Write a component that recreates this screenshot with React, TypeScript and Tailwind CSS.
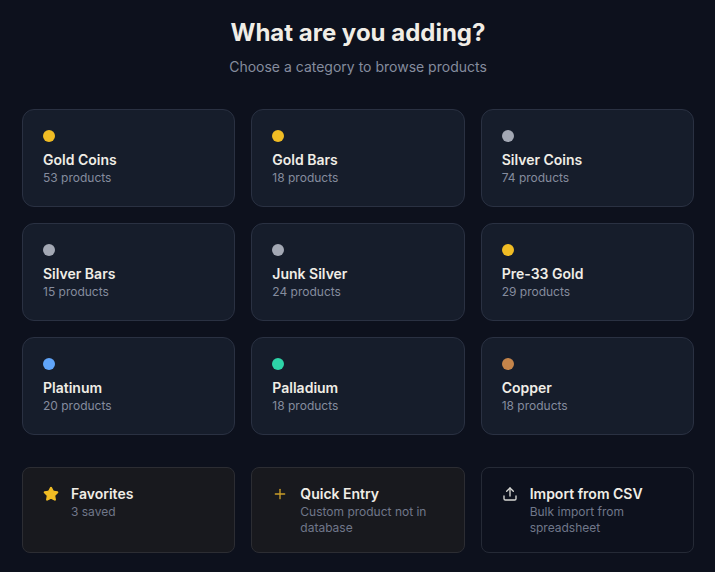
import React from 'react';
import { Star, Plus, Upload } from 'lucide-react';

const categories = [
    { name: 'Gold Coins', count: 53, dot: 'bg-[#f0bc24]' },
    { name: 'Gold Bars', count: 18, dot: 'bg-[#f0bc24]' },
    { name: 'Silver Coins', count: 74, dot: 'bg-[#a3a8b4]' },
    { name: 'Silver Bars', count: 15, dot: 'bg-[#a3a8b4]' },
    { name: 'Junk Silver', count: 24, dot: 'bg-[#a3a8b4]' },
    { name: 'Pre-33 Gold', count: 29, dot: 'bg-[#f0bc24]' },
    { name: 'Platinum', count: 20, dot: 'bg-[#60a5fa]' },
    { name: 'Palladium', count: 18, dot: 'bg-[#2dd4a8]' },
    { name: 'Copper', count: 18, dot: 'bg-[#c4844a]' },
];

export default function App() {
    return (
        <div className="min-h-[572px] bg-[#0d111d] font-['Inter',sans-serif]">
            <div className="ml-[22px] w-[672px] pt-[17px]">
                <div className="mb-8 text-center">
                    <h1 className="text-2xl font-bold text-[#f0ede6]">What are you adding?</h1>
                    <p className="mt-2 text-sm text-[#858c9e]">Choose a category to browse products</p>
                </div>

                {/* Categories */}
                <div className="grid grid-cols-3 gap-4">
                    {categories.map((c) => (
                        <div key={c.name} className="rounded-xl border border-[#2a3142] bg-[#161d2b] p-5">
                            <div className={`mb-2 h-3 w-3 rounded-full ${c.dot}`} />
                            <p className="text-sm font-semibold text-[#f0ede6]">{c.name}</p>
                            <p className="text-xs text-[#858c9e]">{c.count} products</p>
                        </div>
                    ))}
                </div>

                {/* Other ways to add */}
                <div className="mt-8 grid grid-cols-3 gap-4">
                    <div className="flex items-start gap-3 rounded-lg border border-[#2c2d33] bg-[#18191e] px-5 py-4">
                        <Star className="mt-0.5 h-4 w-4 shrink-0 fill-[#f0bc24] text-[#f0bc24]" />
                        <div>
                            <p className="text-sm font-semibold text-[#f0ede6]">Favorites</p>
                            <p className="text-xs text-[#70778a]">3 saved</p>
                        </div>
                    </div>
                    <div className="flex items-start gap-3 rounded-lg border border-[#2c2d33] bg-[#18191e] px-5 py-4">
                        <Plus className="mt-0.5 h-4 w-4 shrink-0 text-[#c99d29]" />
                        <div>
                            <p className="text-sm font-semibold text-[#f0ede6]">Quick Entry</p>
                            <p className="text-xs text-[#70778a]">Custom product not in database</p>
                        </div>
                    </div>
                    <div className="flex items-start gap-3 rounded-lg border border-[#252a36] px-5 py-4">
                        <Upload className="mt-0.5 h-4 w-4 shrink-0 text-[#d8d8d4]" />
                        <div>
                            <p className="text-sm font-semibold text-[#f0ede6]">Import from CSV</p>
                            <p className="text-xs text-[#70778a]">Bulk import from spreadsheet</p>
                        </div>
                    </div>
                </div>
            </div>
        </div>
    );
}
